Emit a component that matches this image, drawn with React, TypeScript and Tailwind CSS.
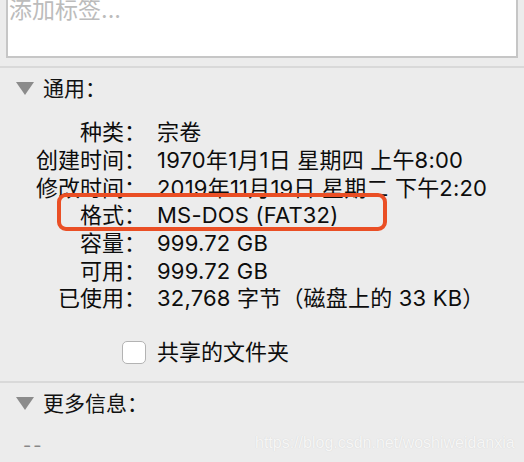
import React from 'react';

const rows: { label: string; value: string }[] = [
  { label: '种类：', value: '宗卷' },
  { label: '创建时间：', value: '1970年1月1日 星期四 上午8:00' },
  { label: '修改时间：', value: '2019年11月19日 星期二 下午2:20' },
  { label: '格式：', value: 'MS-DOS (FAT32)' },
  { label: '容量：', value: '999.72 GB' },
  { label: '可用：', value: '999.72 GB' },
  { label: '已使用：', value: '32,768 字节（磁盘上的 33 KB）' },
];

const font = { fontFamily: 'Inter, "Noto Sans CJK SC", sans-serif' };

const Triangle: React.FC = () => (
  <svg width="18" height="14" viewBox="0 0 18 14" className="shrink-0">
    <polygon points="0,0 18,0 9,13" fill="#8b8b8b" />
  </svg>
);

const SectionHeader: React.FC<{ title: string }> = ({ title }) => (
  <div className="flex items-center h-[28px] pl-[16px] gap-[9px]">
    <Triangle />
    <span className="text-[21px] text-[#111]">{title}</span>
  </div>
);

export default function App() {
  return (
    <div
      className="w-[524px] h-[462px] bg-[#ececec] overflow-hidden relative text-[#0d0d0d]"
      style={font}
    >
      {/* Tag input */}
      <div className="mx-[6px] h-[58px] bg-white border-2 border-t-0 border-[#c6c6c6] overflow-hidden">
        <div className="text-[23px] leading-[24px] text-[#bcbcbc] pl-[1px] -mt-[2px]">
          添加标签...
        </div>
      </div>

      <div className="mt-[8px] h-[2px] bg-[#d9d9d9]" />

      {/* General */}
      <div className="pt-[7px]">
        <SectionHeader title="通用：" />
        <div className="mt-[16px]">
          {rows.map((row) => (
            <div key={row.label} className="flex h-[27.7px] items-center text-[22px]">
              <div className="w-[146px] text-right shrink-0 whitespace-nowrap">{row.label}</div>
              <div className="pl-[11px] whitespace-nowrap tracking-[0.2px]">{row.value}</div>
            </div>
          ))}
        </div>
      </div>

      {/* Shared folder checkbox */}
      <div className="flex items-center mt-[28px] h-[24px]">
        <div className="ml-[122px] w-[24px] h-[23px] rounded-[5px] bg-white border border-[#b3b3b3]" />
        <span className="ml-[11px] text-[22px]">共享的文件夹</span>
      </div>

      <div className="mt-[16px] h-[2px] bg-[#d9d9d9]" />

      {/* More info */}
      <div className="pt-[7px]">
        <SectionHeader title="更多信息：" />
        <div className="mt-[14px] pl-[23px] text-[18px] text-[#888] tracking-[2px]">--</div>
      </div>

      {/* Highlight around format row */}
      <div className="absolute left-[57px] top-[193px] w-[330px] h-[38px] rounded-[9px] border-4 border-[#ea4f25]" />

      {/* Watermark */}
      <div
        className="absolute left-[255px] top-[434px] text-[16px] leading-[18px] text-[#f6f6f6]"
        style={{ fontFamily: '"Liberation Sans", Arial, sans-serif', textShadow: '0 0 1px #cfcfcf' }}
      >
        https://blog.csdn.net/woshiweidanxia
      </div>
    </div>
  );
}
